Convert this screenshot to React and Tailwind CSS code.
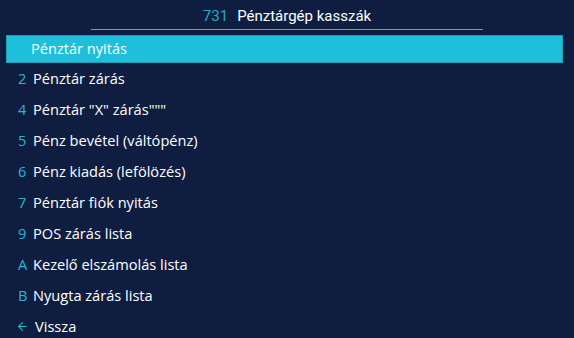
import { ArrowLeft } from 'lucide-react'

export default function App() {
  const items = [
    ['2', 'Pénztár zárás'],
    ['4', 'Pénztár "X" zárás"""'],
    ['5', 'Pénz bevétel (váltópénz)'],
    ['6', 'Pénz kiadás (lefölözés)'],
    ['7', 'Pénztár fiók nyitás'],
    ['9', 'POS zárás lista'],
    ['A', 'Kezelő elszámolás lista'],
    ['B', 'Nyugta zárás lista'],
  ]
  return (
    <div className="w-[574px] h-[338px] overflow-hidden bg-[#0f1e40] text-white font-['Open_Sans',sans-serif]">
      {/* Title */}
      <div className="flex justify-center pt-[6px]">
        <div className="w-[392px] flex justify-center border-b-[1.5px] border-[#8a93a8] pb-[3px] font-['Roboto',sans-serif] text-[15px] leading-[20px]">
          <span className="text-[#2aa9c9] mr-[9px]">731</span>
          <span>Pénztárgép kasszák</span>
        </div>
      </div>

      {/* Menu */}
      <div className="mt-[5px] flex flex-col text-[14.6px]">
        <div className="mx-[6px] w-[557px] h-[28px] bg-[#1dbfdb] border border-[#199fb8] flex items-center pl-[24px]">
          Pénztár nyitás
        </div>
        {items.map(([key, label]) => (
          <div key={label} className="h-[31px] flex items-center pl-[18px]">
            <span className="w-[15px] text-[#2bb3d4]">{key}</span>
            <span>{label}</span>
          </div>
        ))}
        <div className="h-[31px] flex items-center pl-[16px]">
          <ArrowLeft size={13} strokeWidth={2} className="text-[#2bb3d4] mr-[6px]" />
          <span>Vissza</span>
        </div>
      </div>
    </div>
  )
}
